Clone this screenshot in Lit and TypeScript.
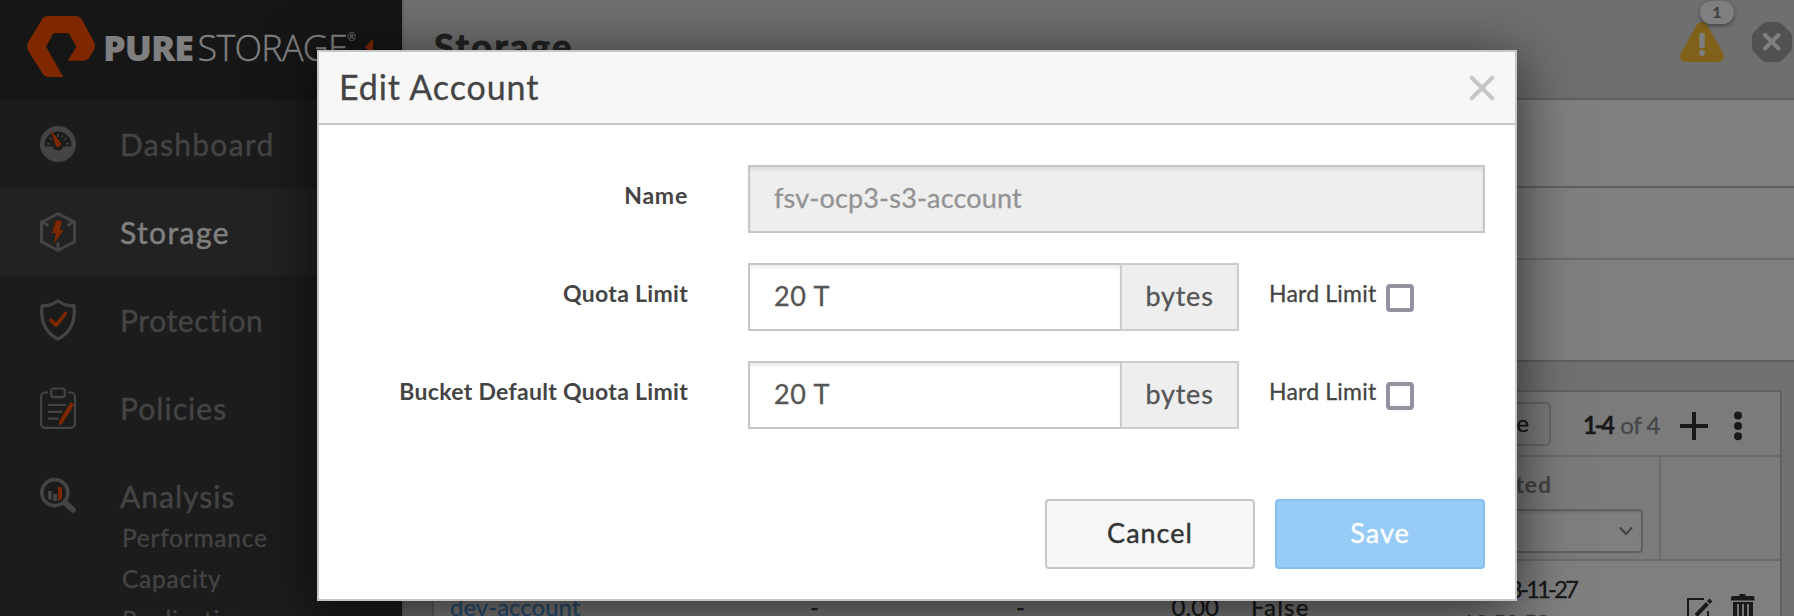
import { LitElement, html, css, svg } from "lit";
import { customElement } from "lit/decorators.js";
import { classMap } from "lit/directives/class-map.js";

const icon = (name: string) => {
  switch (name) {
    case "dashboard":
      return svg`<svg class="ico" width="36" height="42" viewBox="0 0 36 42">
        <circle cx="18" cy="21" r="18" fill="#888"/>
        <path d="M4.6 23.6 A13.5 13.5 0 1 1 31.4 23.6 H23.5 A5.8 5.8 0 0 1 12.500 23.6 Z" fill="#383838"/>
        <g stroke="#888" stroke-width="1.5"><path d="M7 20.4l3 .5M9.3 15l2.6 1.8M18 11v3M22.8 12l-1 2.5M26.7 15l-2.6 1.8M29 20.4l-3 .5"/></g>
        <path d="M10.500 7 L20.6 19.6 A2.7 2.7 0 0 1 15.600 22.200 Z" fill="#fe5000"/>
      </svg>`;
    case "storage":
      return svg`<svg class="ico" width="36" height="42" viewBox="0 0 36 42" fill="none" stroke="#888" stroke-width="3">
        <path d="M18 2.7 L34.5 11.2 V30.8 L18 39.3 L1.5 30.8 V11.2 Z"/>
        <path d="M2 10.5 L7.5 14 M34 10.5 L28.5 14 M18 39 V32.5" stroke-linecap="round"/>
        <path d="M15.8 9.7 H22 L19.6 19.2 H23.6 L14 32.4 L15.7 22 H12 Z" fill="#fe5000" stroke="none"/>
      </svg>`;
    case "protection":
      return svg`<svg class="ico" width="36" height="42" viewBox="0 0 36 42" fill="none" stroke="#888" stroke-width="3.2" stroke-linejoin="round">
        <path d="M18 1.7 Q11 7 2 6.9 C.5 21 4 33 18 40.1 C32 33 35.500 21 34 6.900 Q25 7 18 1.700Z"/>
        <path d="M11 21.300 L16.200 26.200 L25.500 14.500" stroke="#fe5000" stroke-width="3.600" stroke-linecap="round"/>
      </svg>`;
    case "policies":
      return svg`<svg class="ico" width="36" height="42" viewBox="0 0 36 42" fill="none" stroke="#888" stroke-width="2.200">
        <path d="M8 5.500 H5 A4 4 0 0 0 1.100 9.500 V36.800 A4 4 0 0 0 5 40.800 H31 A4 4 0 0 0 34.900 36.800 V9.500 A4 4 0 0 0 31 5.500 H28"/>
        <rect x="11.200" y="1.500" width="13.600" height="8.600" rx="2.500"/>
        <path d="M8 18 H26 M8 24.800 H22.500 M8 31.700 H18.500"/>
        <path d="M30.500 19.500 L21 35" stroke="#fe5000" stroke-width="4.200"/>
        <path d="M31.300 17.700 L30.900 18.400" stroke="#fe5000" stroke-width="4.200" stroke-linecap="round"/>
        <path d="M19.200 34 L23 36.200 L19 38.200Z" fill="#fe5000" stroke="none"/>
      </svg>`;
    default:
      return svg`<svg class="ico" width="36" height="42" viewBox="0 0 36 42" fill="none">
        <circle cx="14.800" cy="17.600" r="13" stroke="#888" stroke-width="3.600"/>
        <path d="M25 27.500 L33 34.800" stroke="#888" stroke-width="5.800" stroke-linecap="round"/>
        <path d="M8 16 h3.800 v9.500 l-3.800 -1.500z M13 19 h3.900 v7 h-3.900z" fill="#888"/>
        <path d="M18 12.300 h4 v11.200 l-4 2.300z" fill="#fe5000"/>
      </svg>`;
  }
};

@customElement("side-nav")
class SideNav extends LitElement {
  static styles = css`
    :host { display: block; background: #383838; height: 616px; overflow: hidden; }
    .brand { height: 100px; box-sizing: border-box; background: #2c2c2c; display: flex; align-items: flex-start; padding: 16px 0 0 27px; color: #fff; }
    .mark { display: block; flex: none; }
    .word { font: 800 36px/61px "Open Sans", sans-serif; letter-spacing: -1px; margin: 1px 0 0 7px; width: 94.5px; white-space: nowrap; }
    .thin { font: 300 36px/61px "Open Sans", sans-serif; letter-spacing: -0.75px; margin-top: 1px; width: 150px; white-space: nowrap; -webkit-text-stroke: .3px #fff; }
    .reg { font: 400 10px/12px "Open Sans", sans-serif; margin-top: 15px; width: 17px; }
    .arrow { display: block; margin-top: 23px; }
    .item { height: 88px; display: flex; align-items: center; gap: 44px; padding-left: 40px; color: #888; }
    .item.active { background: #444; color: #fff; }
    .ico { display: block; flex: none; }
    .label { font: 400 30px/42px Lato, sans-serif; white-space: nowrap; margin-bottom: 1px; -webkit-text-stroke: .4px currentColor; }
    .l0 { letter-spacing: 1.300px; } .l1 { letter-spacing: 1.400px; } .l2 { letter-spacing: .6px; } .l3 { letter-spacing: 1.050px; } .l4 { letter-spacing: 1px; }
    .subs { margin-top: -23px; padding-left: 122px; color: #888; font: 400 24.500px/41px Lato, sans-serif; letter-spacing: .75px; -webkit-text-stroke: .3px currentColor; }
  `;
  items = ["Dashboard", "Storage", "Protection", "Policies", "Analysis"];
  render() {
    return html`
      <div class="brand">
        <svg class="mark" width="69" height="62" viewBox="81 48 207 186">
          <path fill="#fe5000" d="M145 48 H226 Q239 48 246 60 L281 124 Q289 140 280 152 L269 172 Q262 182 250 182 H203 L229 140 L206 100 H160 L138 140 L190 231 H146 Q134 231 127 220 L86 154 Q77 140 86 124 L125 60 Q132 48 145 48Z"/>
        </svg>
        <span class="word">PURE</span><span class="thin">STORAGE</span><span class="reg">®</span>
        <svg class="arrow" width="8" height="16" viewBox="0 0 8 16"><path d="M8 0V16L0 8Z" fill="#fe5000"/></svg>
      </div>
      ${this.items.map((t, i) => html`
        <div class=${classMap({ item: true, active: i === 1 })}>
          ${icon(t.toLowerCase())}<span class="label l${i}">${t}</span>
        </div>`)}
      <div class="subs"><div>Performance</div><div>Capacity</div><div>Replication</div></div>
    `;
  }
}

@customElement("storage-page")
class StoragePage extends LitElement {
  static styles = css`
    :host { display: block; height: 616px; overflow: hidden; background: #e2e2e2; border-left: 2px solid #ccc; box-sizing: border-box; font-family: Lato, sans-serif; color: #444; }
    .head { height: 98px; display: flex; justify-content: space-between; background: #dedede; border-bottom: 2px solid #c1c1c1; }
    .title { font: 700 36px/48px Lato, sans-serif; letter-spacing: 2.500px; margin: 22px 0 0 30px; -webkit-text-stroke: 1px #444; }
    .alerts { display: flex; gap: 28px; padding: 22px 2px 0 0; }
    .alert { position: relative; width: 44px; height: 40px; }
    .alert svg, .oct { display: block; }
    .badge { position: absolute; left: 20px; top: -21px; width: 34px; height: 23px; border-radius: 12px; background: #fff; box-shadow: 0 2px 4px rgba(0,0,0,.4); text-align: center; font: 700 16px/22px Lato, sans-serif; color: #777; }
    .band { background: #fff; border-bottom: 2px solid #c1c1c1; }
    .b1 { height: 86px; } .b2 { height: 70px; border-color: #d4d4d4; } .b3 { height: 100px; border-color: #bfbfbf; }
    .card { margin: 28px 12px 0 28px; border: 2px solid #c4c4c4; background: #fff; height: 300px; }
    .tools { height: 63px; border-bottom: 2px solid #d6d6d6; background: #f7f7f7; display: flex; justify-content: flex-end; align-items: flex-start; }
    .btn { box-sizing: border-box; width: 110px; height: 44px; margin-top: 10px; border: 2px solid #cbcbcb; border-radius: 6px; text-align: right; padding-right: 20px; font: 400 24px/38px Lato, sans-serif; color: #333; -webkit-text-stroke: .4px #333; }
    .count { margin: 11px 0 0 32px; width: 97px; font: 400 24px/43px Lato, sans-serif; color: #8c8c8c; white-space: nowrap; letter-spacing: -.4px; -webkit-text-stroke: .3px currentColor; }
    .range { font-weight: 700; letter-spacing: -2.400px; color: #333; margin-right: 2px; }
    .plus { margin: 20px 26px 0 0; } .dots { margin: 19px 38px 0 0; }
    .filters { height: 102px; display: grid; grid-template-columns: 1015px 212px 1fr; border-bottom: 2px solid #d6d6d6; background: #f7f7f7; }
    .created { border-right: 2px solid #d6d6d6; }
    .name { width: 103px; text-align: right; font: 700 23px/34px Lato, sans-serif; letter-spacing: .9px; color: #888; margin-top: 10px; }
    .pick { box-sizing: border-box; width: 194px; height: 44px; border: 2px solid #c1c1c1; border-radius: 4px; background: #fff; margin-top: 8px; display: flex; justify-content: flex-end; align-items: center; padding-right: 8px; box-shadow: inset 0 2px 3px rgba(0,0,0,.1); }
    .row { display: grid; grid-template-columns: 376px 206px 203px 32px 197px 128px 1fr; font: 400 24px/36px Lato, sans-serif; color: #333; -webkit-text-stroke: .3px currentColor; }
    .cell { margin-top: 28px; white-space: nowrap; }
    .link { color: #55a5e8; padding-left: 16px; }
    .used { display: flex; justify-content: space-between; }
    .false { letter-spacing: 1.200px; grid-column: 5; }
    .date { text-align: right; margin-top: 11px; line-height: 34px; letter-spacing: -2.900px; }
    .time { padding-right: 27px; color: #888; letter-spacing: -1px; }
    .acts { display: flex; gap: 18px; align-items: flex-start; margin: 33px 0 0 111px; -webkit-text-stroke: 0; }
    .edit { margin-top: 3px; }
  `;
  render() {
    return html`
      <div class="head">
        <div class="title">Storage</div>
        <div class="alerts">
          <div class="alert">
            <svg width="44" height="40" viewBox="0 0 44 40"><path d="M22 0 Q25.500 0 27 2.500 L43 31 Q46 38 39 40 H5 Q-2 38 1 31 L17 2.500 Q18.500 0 22 0Z" fill="#fec234"/><path d="M22 13.500V23.500" stroke="#fff" stroke-width="5.400" stroke-linecap="round"/><circle cx="22" cy="31" r="3" fill="#fff"/></svg>
            <span class="badge">1</span>
          </div>
          <svg class="oct" width="40" height="40" viewBox="0 0 40 40"><path d="M14 0H26Q28 0 29.500 1.500L38.500 10.500Q40 12 40 14V26Q40 28 38.500 29.500L29.500 38.500Q28 40 26 40H14Q12 40 10.500 38.500L1.500 29.500Q0 28 0 26V14Q0 12 1.500 10.500L10.500 1.500Q12 0 14 0Z" fill="#a2a2a2"/><path d="M13 13L26.500 26.500M26.500 13L13 26.500" stroke="#fff" stroke-width="4" stroke-linecap="round"/></svg>
        </div>
      </div>
      <div class="band b1"></div><div class="band b2"></div><div class="band b3"></div>
      <div class="card">
        <div class="tools">
          <div class="btn">Space</div>
          <div class="count"><span class="range">1-4</span> of 4</div>
          <svg class="plus" width="28" height="28" viewBox="0 0 28 28"><path d="M14 0V28M0 14H28" stroke="#333" stroke-width="4"/></svg>
          <svg class="dots" width="8" height="30" viewBox="0 0 8 30" fill="#333"><circle cx="4" cy="4.500" r="4"/><circle cx="4" cy="15" r="4"/><circle cx="4" cy="25.300" r="4"/></svg>
        </div>
        <div class="filters">
          <div></div>
          <div class="created">
            <div class="name">Created</div>
            <div class="pick"><svg width="14" height="10" viewBox="0 0 14 10"><path d="M1 1.500L7 8L13 1.500" fill="none" stroke="#888" stroke-width="2.200"/></svg></div>
          </div>
        </div>
        <div class="row">
          <div class="cell link">dev-account</div>
          <div class="cell">-</div>
          <div class="cell used"><span>-</span><span>0.00</span></div>
          <div class="cell false">False</div>
          <div class="cell date"><div>2023-11-27</div><div class="time">12:50:50</div></div>
          <div class="acts">
            <svg class="edit" width="26" height="28" viewBox="0 0 26 28" fill="none" stroke="#333" stroke-width="2"><path d="M17 2H1V26H21V14"/><path d="M9 18.500L20.500 6.500" stroke-width="4"/><path d="M21.500 5.500L24 3" stroke-width="4"/></svg>
            <svg width="24" height="30" viewBox="0 0 24 30" fill="#333"><path d="M8.500 0H14.500V2H22Q23.500 2 23.500 4V6.500H0V4Q0 2 1.500 2H8.500Z"/><path d="M2 8H22V30H2Z"/><path d="M7 10V30M12 10V30M17 10V30" stroke="#fff" stroke-width="1.800"/></svg>
          </div>
        </div>
      </div>
    `;
  }
}

@customElement("edit-account-dialog")
class EditAccountDialog extends LitElement {
  static styles = css`
    :host { display: block; box-sizing: border-box; width: 1200px; height: 551px; border: 2px solid #c6c6c6; background: #fff; box-shadow: 0 10px 54px rgba(0,0,0,.65); font-family: Lato, sans-serif; color: #444; }
    .head { height: 71px; background: #f7f7f7; border-bottom: 2px solid #c6c6c6; display: flex; justify-content: space-between; align-items: center; padding: 0 20px; }
    .title { font: 400 34px/69px Lato, sans-serif; letter-spacing: .9px; margin-bottom: 2px; -webkit-text-stroke: .3px currentColor; }
    .body { padding: 40px 30px 0 0; display: grid; gap: 30px; }
    .field { display: grid; grid-template-columns: 369px 737px; column-gap: 60px; height: 68px; }
    .label { font: 700 23px/61px Lato, sans-serif; text-align: right; letter-spacing: .3px; white-space: nowrap; }
    .wide { letter-spacing: .8px; }
    .control { display: flex; }
    .input, .unit { box-sizing: border-box; height: 68px; border: 2px solid #c6c6c6; font: 400 27px/62px Lato, sans-serif; padding-left: 24px; color: #555; -webkit-text-stroke: .3px currentColor; }
    .input { flex: 1; box-shadow: inset 0 3px 3px rgba(0,0,0,.07); background: #fff; letter-spacing: .7px; }
    .input.off { background: #eee; color: #939393; letter-spacing: .15px; }
    .input.short { flex: none; width: 374px; }
    .unit { width: 119px; margin-left: -2px; padding: 0; text-align: center; background: #eee; border-color: #ccc; letter-spacing: .8px; }
    .hard { font: 400 23px/61px Lato, sans-serif; letter-spacing: .2px; margin-left: 30px; width: 117px; white-space: nowrap; -webkit-text-stroke: .3px currentColor; }
    .box { box-sizing: border-box; width: 28px; height: 28px; border: 4px solid #9390a0; border-radius: 4px; margin-top: 21px; }
    .foot { display: flex; justify-content: flex-end; gap: 20px; padding: 70px 30px 0 0; }
    .btn { box-sizing: border-box; width: 210px; height: 70px; border: 2px solid #c6c6c6; border-radius: 4px; background: #f7f7f7; text-align: center; font: 400 27px/64px Lato, sans-serif; letter-spacing: 1px; color: #333; -webkit-text-stroke: .4px currentColor; }
    .primary { background: #95cbf4; border-color: #86bfee; color: #fff; }
  `;
  quota(label: string) {
    return html`<div class="field">
      <div class="label">${label}</div>
      <div class="control">
        <div class="input short">20 T</div><div class="unit">bytes</div>
        <div class="hard">Hard Limit</div><div class="box"></div>
      </div>
    </div>`;
  }
  render() {
    return html`
      <div class="head">
        <div class="title">Edit Account</div>
        <svg width="26" height="26" viewBox="0 0 26 26"><path d="M1.500 1.500L24.500 24.500M24.500 1.500L1.500 24.500" stroke="#c6c6c6" stroke-width="4"/></svg>
      </div>
      <div class="body">
        <div class="field"><div class="label wide">Name</div><div class="control"><div class="input off">fsv-ocp3-s3-account</div></div></div>
        ${this.quota("Quota Limit")}
        ${this.quota("Bucket Default Quota Limit")}
      </div>
      <div class="foot"><div class="btn">Cancel</div><div class="btn primary">Save</div></div>
    `;
  }
}

@customElement("app-root")
class AppRoot extends LitElement {
  static styles = css`
    :host { display: block; position: relative; width: 1794px; height: 616px; overflow: hidden; }
    .page { display: grid; grid-template-columns: 402px 1fr; }
    .veil { position: absolute; inset: 0; background: rgba(0,0,0,.5); padding: 50px 0 0 317px; }
  `;
  render() {
    return html`
      <div class="page"><side-nav></side-nav><storage-page></storage-page></div>
      <div class="veil"><edit-account-dialog></edit-account-dialog></div>
    `;
  }
}
